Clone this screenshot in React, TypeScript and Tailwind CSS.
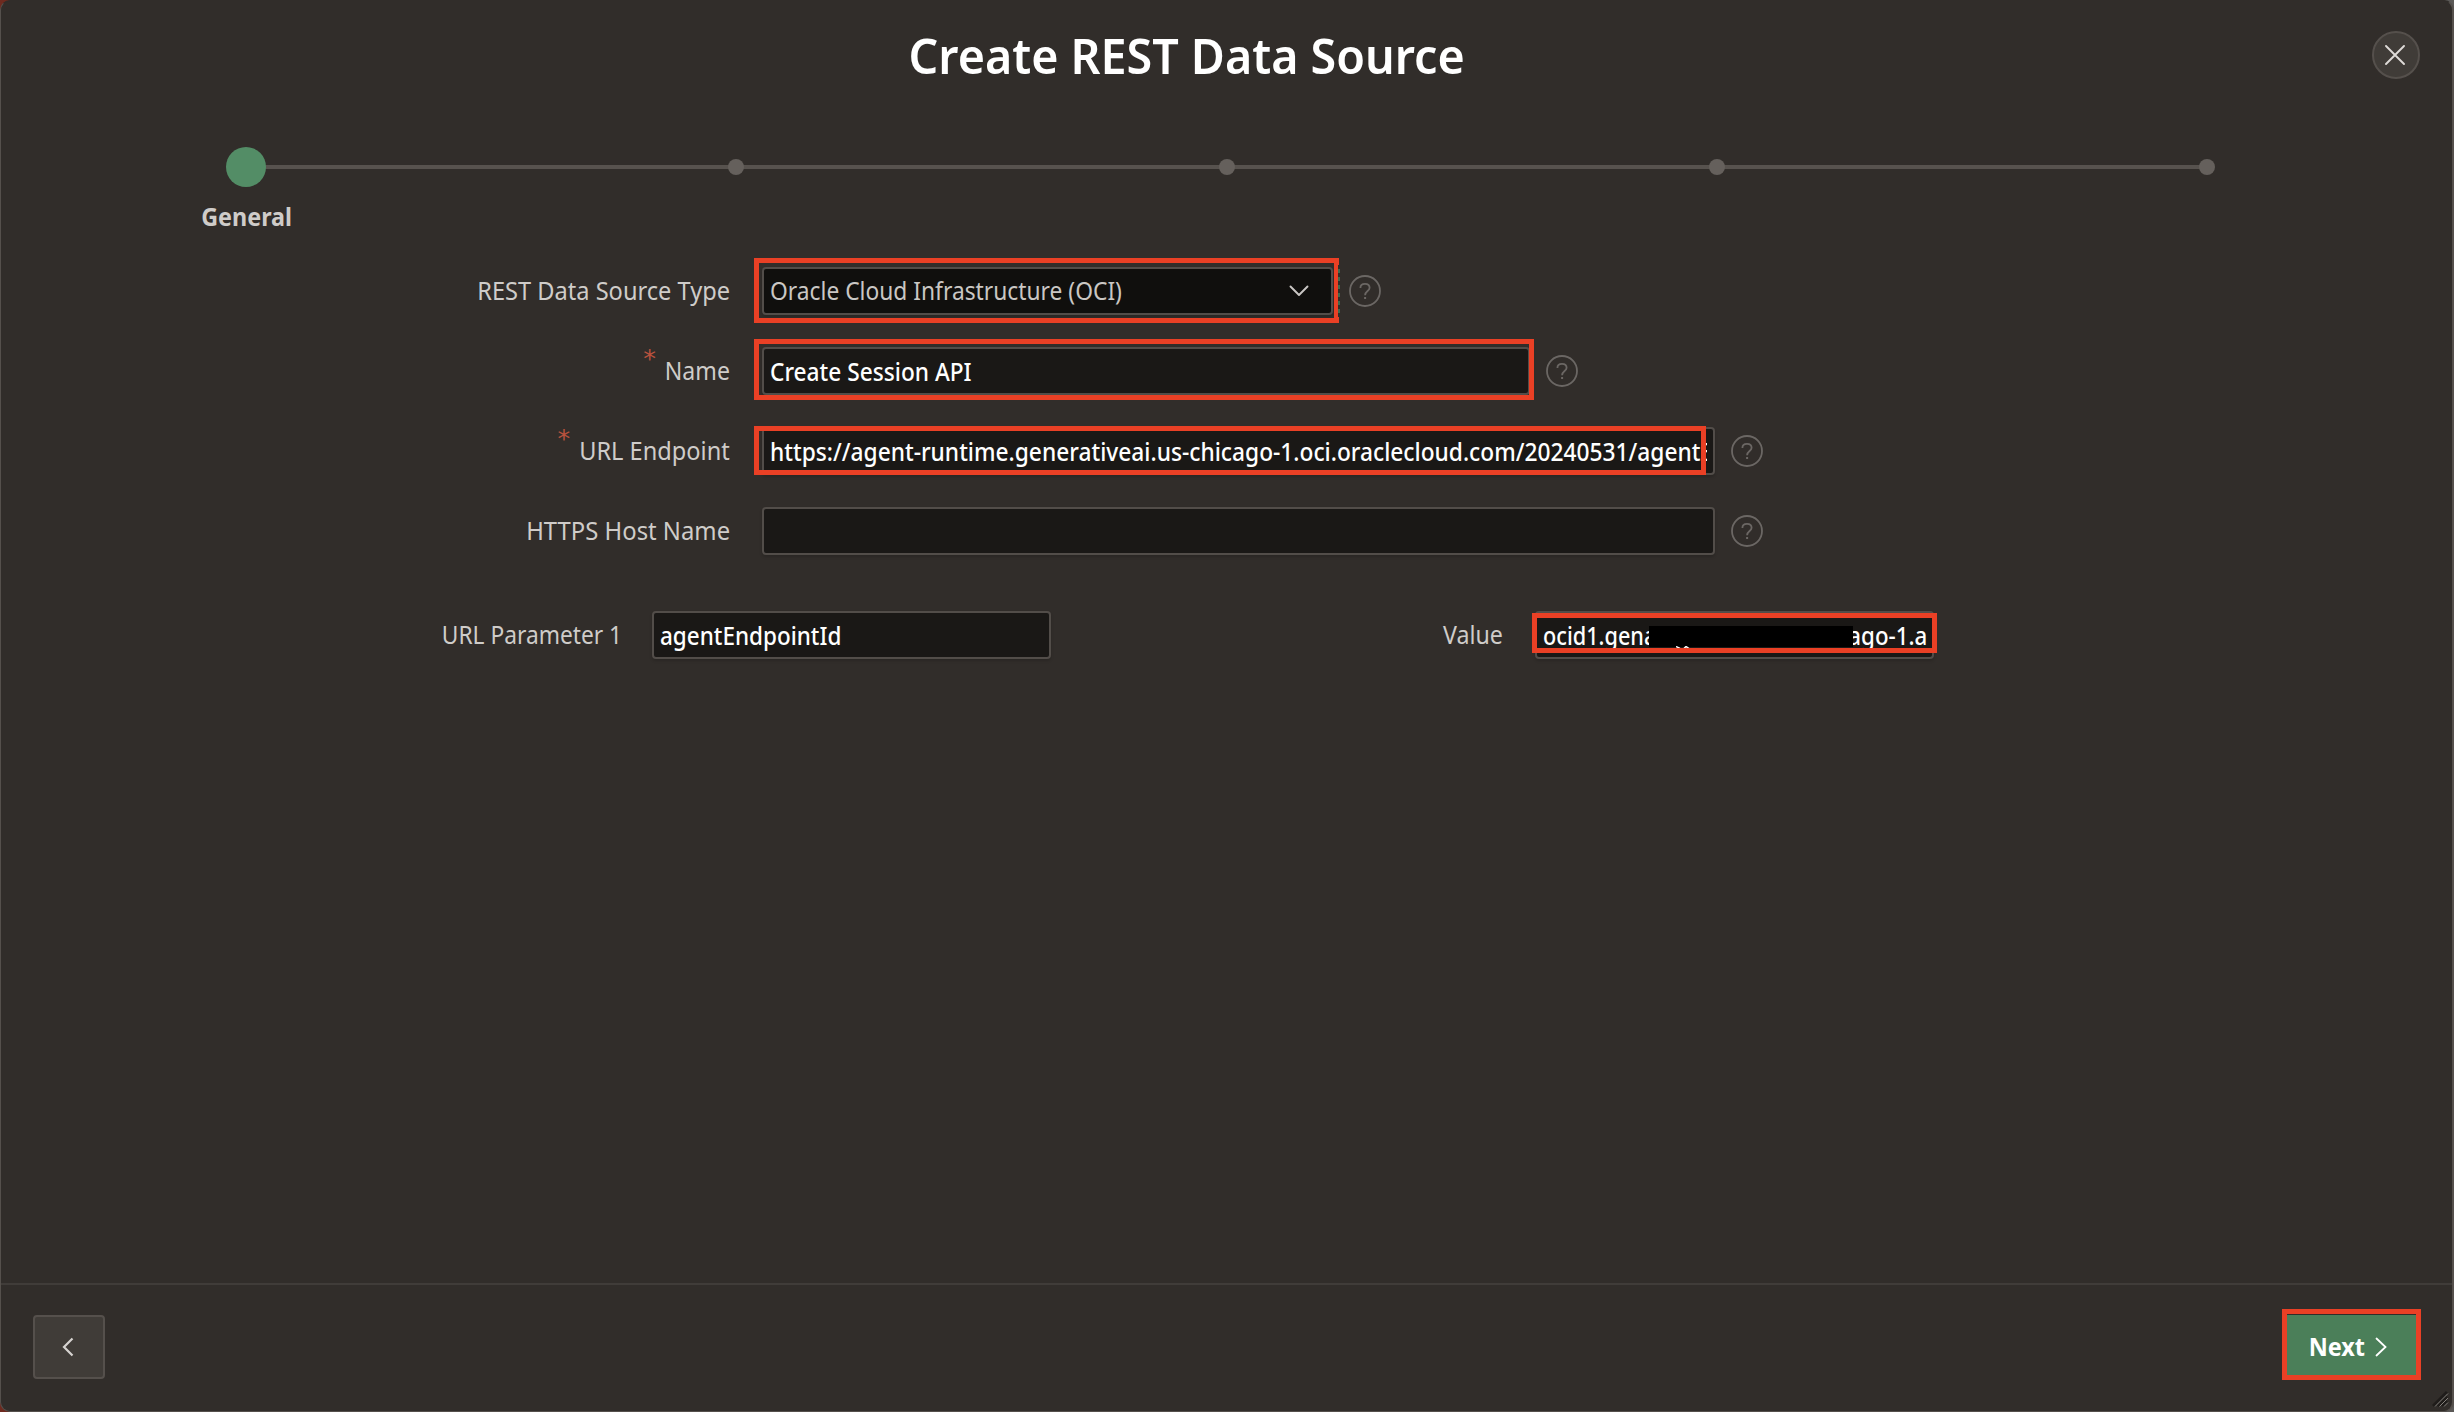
import React from "react";

function Highlight({ className }: { className: string }) {
  return <div className={`pointer-events-none absolute border-[5px] border-[#ea4025] ${className}`} />;
}

function HelpIcon() {
  return (
    <button aria-label="Help" className="ml-4 size-8 shrink-0">
      <svg viewBox="0 0 32 32" className="size-8" fill="none" stroke="#6b6764" strokeWidth="1.8">
        <circle cx="16" cy="16" r="15" />
        <path d="M11.4 12.9C11.4 10.3 13.3 8.9 16 8.9C18.7 8.9 20.6 10.4 20.6 12.7C20.6 16.1 16.1 15.9 16.1 20.3" />
        <path d="M16.1 22v2" strokeWidth="2" />
      </svg>
    </button>
  );
}

function Row({ label, scale, required, children }: { label: string; scale: string; required?: string; children: React.ReactNode }) {
  return (
    <div className="flex h-20 items-center">
      <label className="mr-8 flex w-[730px] items-center justify-end pb-[2px] text-[#cfccc9]">
        {required && <span className={`-mt-6 font-['DejaVu_Sans',sans-serif] text-[#b9523e] ${required}`}>*</span>}
        <span className={`origin-right whitespace-nowrap ${scale}`}>{label}</span>
      </label>
      {children}
    </div>
  );
}

function Field({ className, children }: { className: string; children?: React.ReactNode }) {
  return (
    <div className={`relative flex h-12 shrink-0 items-center rounded-[4px] border-2 border-[#524d49] pr-[5px] pl-[6px] shadow-[0_2px_3px_rgba(0,0,0,0.15)] ${className}`}>
      {children}
    </div>
  );
}

function Steps() {
  return (
    <div className="mt-[36px] px-[225px]">
      <div className="relative flex h-10 w-[1989px] items-center justify-between">
        <div className="absolute top-[18px] right-2 left-5 h-1 bg-[#57524e]" />
        <span className="relative -mr-3 size-10 rounded-full bg-[#538d66]" />
        <span className="relative size-4 rounded-full bg-[#65605c]" />
        <span className="relative size-4 rounded-full bg-[#65605c]" />
        <span className="relative size-4 rounded-full bg-[#65605c]" />
        <span className="relative size-4 rounded-full bg-[#65605c]" />
      </div>
      <div className="mt-[11px] -ml-[29px] w-[100px] text-center leading-9 font-bold text-[#cfccc9]">
        <span className="inline-block scale-x-[0.915]">General</span>
      </div>
    </div>
  );
}

export default function App() {
  return (
    <div className="h-[1412px] w-[2454px] overflow-hidden bg-[linear-gradient(90deg,#6e2a1f_0,#6e2a1f_12px,#5b5957_12px)] font-['Noto_Sans','Open_Sans',sans-serif] text-[25.5px] leading-9">
      <div className="flex h-full flex-col overflow-hidden rounded-[10px] border border-r-2 border-[#55504c] border-t-[#312d2a] bg-[#312d2a]">
        <header className="relative flex h-[110px] items-center justify-center">
          <h1 className="origin-center scale-x-[0.942] pr-[85px] pb-[2px] text-[49.5px] font-[650] whitespace-nowrap text-white">Create REST Data Source</h1>
          <button aria-label="Close" className="absolute top-[30px] right-[32px] flex size-12 items-center justify-center rounded-full border-2 border-[#55504c] bg-[#403c38]">
            <svg viewBox="0 0 20 20" className="mr-[2px] size-5" stroke="#dedbd8" strokeWidth="1.9" strokeLinecap="round">
              <path d="M1 1L19 19M19 1L1 19" />
            </svg>
          </button>
        </header>
        <Steps />
        <main className="mt-[17px] -ml-px flex-1">
          <Row label="REST Data Source Type" scale="scale-x-[0.926]">
            <Field className="w-[571px] justify-between bg-[#100f0d] text-[#cac7c4]">
              <span className="origin-left scale-x-[0.894] pb-[2px] whitespace-nowrap">Oracle Cloud Infrastructure (OCI)</span>
              <svg viewBox="0 0 20 12" className="absolute right-[22px] h-3 w-5" fill="none" stroke="#cac7c4" strokeWidth="1.9" strokeLinecap="round" strokeLinejoin="round">
                <path d="M1.5 1.5L10 10L18.5 1.5" />
              </svg>
              <Highlight className="-top-[11px] -left-[10px] h-[65px] w-[585px]" />
              <div className="absolute -top-[4px] -right-[9px] h-[52px] w-[2px] bg-[repeating-linear-gradient(180deg,#312d2a_0,#312d2a_4px,#3e6b4e_4px,#3e6b4e_8px)]" />
            </Field>
            <HelpIcon />
          </Row>
          <Row label="Name" scale="scale-x-[0.905]" required="mr-[2px]">
            <Field className="w-[768px] bg-[#1a1816] font-medium text-white">
              <span className="origin-left scale-x-[0.89] whitespace-nowrap">Create Session API</span>
              <Highlight className="-top-[10px] -left-[10px] h-[61px] w-[780px]" />
            </Field>
            <HelpIcon />
          </Row>
          <Row label="URL Endpoint" scale="scale-x-[0.925]" required="-mr-[3px]">
            <Field className="w-[953px] bg-[#1a1816] font-medium text-white">
              <div className="w-[937px] overflow-hidden">
                <span className="inline-block origin-left scale-x-[0.892] whitespace-nowrap">https://agent-runtime.generativeai.us-chicago-1.oci.oraclecloud.com/20240531/agentEndpoints</span>
              </div>
              <Highlight className="-top-[3px] -left-[10px] h-[49px] w-[952px]" />
            </Field>
            <HelpIcon />
          </Row>
          <Row label="HTTPS Host Name" scale="scale-x-[0.935]">
            <Field className="w-[953px] bg-[#1a1816]" />
            <HelpIcon />
          </Row>
          <div className="mt-6 flex h-20 items-center text-[#cfccc9]">
            <label className="mr-[30px] flex w-[622px] justify-end pb-[2px]">
              <span className="origin-right scale-x-[0.892] whitespace-nowrap">URL Parameter 1</span>
            </label>
            <Field className="w-[399px] bg-[#1a1816] font-medium text-white">
              <span className="origin-left scale-x-[0.882]">agentEndpointId</span>
            </Field>
            <label className="mr-8 flex w-[452px] justify-end pb-[2px]">
              <span className="origin-right scale-x-[0.91]">Value</span>
            </label>
            <Field className="w-[399px] justify-between bg-[#1a1816] font-medium text-white">
              <span className="origin-left scale-x-[0.85] whitespace-nowrap">ocid1.gena</span>
              <span className="origin-right scale-x-[0.875] whitespace-nowrap">ago-1.a</span>
              <div className="absolute top-[13px] left-[112px] h-[21px] w-[204px] bg-black" />
              <svg viewBox="0 0 14 3" className="absolute top-[33px] left-[139px] h-[3px] w-[14px]" fill="none" stroke="#ffffff" strokeWidth="1.5">
                <path d="M0 .5L4 2.5M8 2.5L10 .5L13 2.5" />
              </svg>
              <Highlight className="top-0 -left-[5px] h-10 w-[405px]" />
            </Field>
          </div>
        </main>
        <footer className="flex h-[128px] items-start justify-between border-t-2 border-[#403c39] pt-[30px] pr-9 pl-8">
          <button aria-label="Previous" className="flex h-16 w-[72px] items-center justify-center rounded-[4px] border-2 border-[#55504c] bg-[#403c38]">
            <svg viewBox="0 0 12 20" className="mr-[3px] h-5 w-3" fill="none" stroke="#d6d3d0" strokeWidth="2.2">
              <path d="M10.5 1.5L2 10L10.5 18.5" />
            </svg>
          </button>
          <button className="relative flex h-16 w-[129px] items-center bg-[#4b7f59] pl-[18px] font-bold text-white">
            <span className="origin-left scale-x-[0.92] pb-[3px] pl-1">Next</span>
            <svg viewBox="0 0 12 20" className="ml-[5px] h-5 w-3" fill="none" stroke="#ffffff" strokeWidth="1.8" strokeLinecap="round">
              <path d="M1.5 1.5L10.5 10L1.5 18.5" />
            </svg>
            <Highlight className="-top-[6px] -left-[5px] h-[71px] w-[139px]" />
          </button>
        </footer>
      </div>
      <svg viewBox="0 0 18 18" className="absolute top-[1390px] left-[2432px] size-[18px]" fill="none">
        <path d="M1 16L15 2M5.5 16L15 6.5M10 16L15 11" stroke="#1f1c1a" strokeWidth="3" />
        <path d="M3 16.5L16 3.5M7.5 16.5L16 8M12 16.5L16 12.5" stroke="#85817d" strokeWidth="1" />
      </svg>
    </div>
  );
}
